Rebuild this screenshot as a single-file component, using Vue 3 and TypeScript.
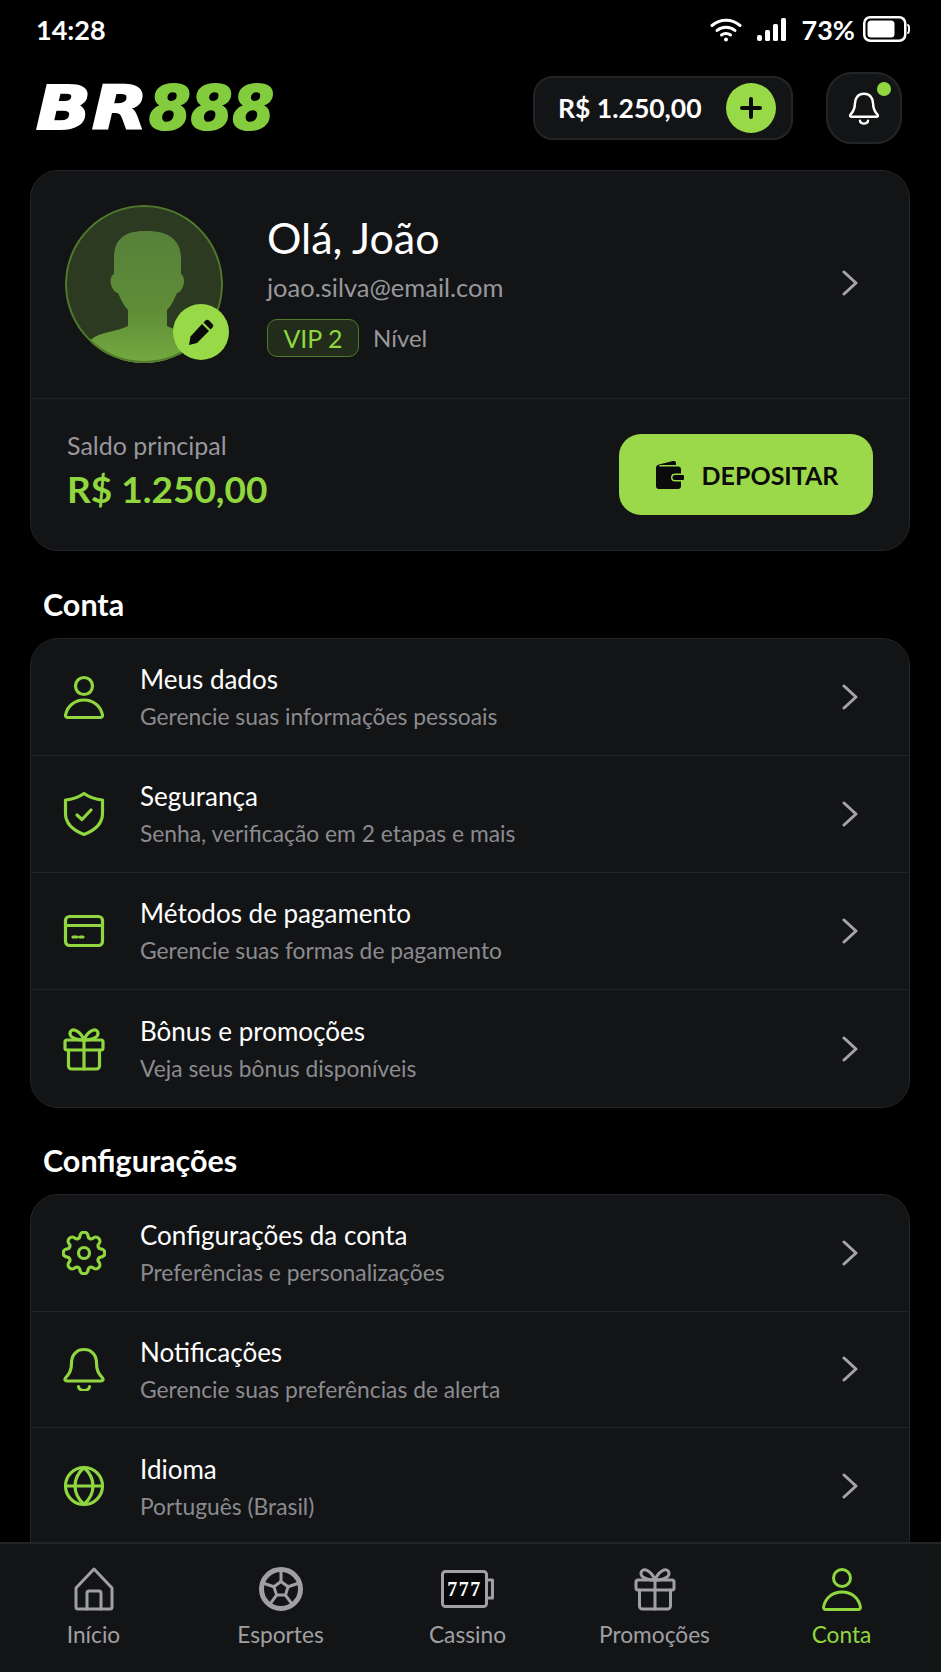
<script setup lang="ts">
interface MenuItem {
  icon: string
  title: string
  sub: string
}

interface NavItem {
  icon: string
  label: string
  active?: boolean
}

// engrenagem de 8 dentes, gerada em vez de escrita à mão
function gearPath(): string {
  const c = 22
  const r = 17.2
  const half = 0.24
  const pt = (a: number) => `${(c + r * Math.cos(a)).toFixed(2)} ${(c + r * Math.sin(a)).toFixed(2)}`
  let d = ''
  for (let i = 0; i < 8; i++) {
    const a = (i * Math.PI) / 4 - Math.PI / 2
    d += i === 0 ? `M${pt(a - half)}` : ''
    d += `A4 4 0 0 1 ${pt(a + half)}`
    d += `A3 3 0 0 0 ${pt(a + Math.PI / 4 - half)}`
  }
  return d + 'Z'
}

const icons: Record<string, string[]> = {
  user: [
    'M22 2.5a8.5 8.5 0 1 0 0 17a8.5 8.5 0 1 0 0-17Z',
    'M6 42.5h32c1.8 0 2.8-1.2 2.4-2.8C38.5 30.5 31 25 22 25S5.5 30.5 3.6 39.7C3.2 41.3 4.2 42.5 6 42.5Z'
  ],
  shield: [
    'M22 1.5C27 5 33 7.5 40.5 8v13.5c0 9.5-7 16.5-18.5 21C10.5 38 3.5 31 3.5 21.5V8C11 7.5 17 5 22 1.5Z',
    'M15 23l5 4.5 9-9.5'
  ],
  card: [
    'M7.5 7.5h29a4 4 0 0 1 4 4v21a4 4 0 0 1-4 4h-29a4 4 0 0 1-4-4v-21a4 4 0 0 1 4-4Z',
    'M3.5 16.5h37',
    'M11 28h4M18 28h3'
  ],
  gift: [
    'M5 13h34a2 2 0 0 1 2 2v6a2 2 0 0 1-2 2H5a2 2 0 0 1-2-2v-6a2 2 0 0 1 2-2Z',
    'M6.5 23v16a3 3 0 0 0 3 3h25a3 3 0 0 0 3-3V23',
    'M22 13v29',
    'M22 13C19 5 11 0 8.5 4.5 6 9.5 13 13 22 13ZM22 13C25 5 33 0 35.5 4.5 38 9.5 31 13 22 13Z'
  ],
  gear: [gearPath(), 'M22 16.5a5.5 5.5 0 1 0 0 11a5.5 5.5 0 1 0 0-11Z'],
  bell: [
    'M22 2.5c-8 0-12.5 6-12.5 13.5 0 7.5-2 10.5-6 15-1.3 1.5-.4 3 1.5 3h34c1.9 0 2.8-1.5 1.5-3-4-4.5-6-7.5-6-15C34.5 8.5 30 2.5 22 2.5Z',
    'M16.5 39.5a5.5 4 0 0 0 11 0'
  ],
  globe: [
    'M22 3.5a18.5 18.5 0 1 0 0 37a18.5 18.5 0 1 0 0-37Z',
    'M22 3.5c-12 11-12 26 0 37c12-11 12-26 0-37Z',
    'M3.5 22h37'
  ],
  home: [
    'M22 2 40 21v19a2 2 0 0 1-2 2H6a2 2 0 0 1-2-2V21Z',
    'M15 42V26a2 2 0 0 1 2-2h10a2 2 0 0 1 2 2V42'
  ],
  ball: [
    'M22 1.5a20.5 20.5 0 1 0 0 41a20.5 20.5 0 1 0 0-41Z',
    'M22 3.5a18.5 18.5 0 1 0 0 37a18.5 18.5 0 1 0 0-37Z',
    'M22 14.5l7.1 5.2-2.7 8.4h-8.8l-2.7-8.4Z',
    'M22 14.5V2M29.1 19.7 41 15.8M26.4 28.1 33.8 38.2M17.6 28.1 10.2 38.2M14.9 19.7 3 15.8'
  ]
}

const accountItems: MenuItem[] = [
  { icon: 'user', title: 'Meus dados', sub: 'Gerencie suas informações pessoais' },
  { icon: 'shield', title: 'Segurança', sub: 'Senha, verificação em 2 etapas e mais' },
  { icon: 'card', title: 'Métodos de pagamento', sub: 'Gerencie suas formas de pagamento' },
  { icon: 'gift', title: 'Bônus e promoções', sub: 'Veja seus bônus disponíveis' }
]

const settingsItems: MenuItem[] = [
  { icon: 'gear', title: 'Configurações da conta', sub: 'Preferências e personalizações' },
  { icon: 'bell', title: 'Notificações', sub: 'Gerencie suas preferências de alerta' },
  { icon: 'globe', title: 'Idioma', sub: 'Português (Brasil)' }
]

const sections = [
  { title: 'Conta', items: accountItems },
  { title: 'Configurações', items: settingsItems }
]

const navItems: NavItem[] = [
  { icon: 'home', label: 'Início' },
  { icon: 'ball', label: 'Esportes' },
  { icon: 'slot', label: 'Cassino' },
  { icon: 'gift', label: 'Promoções' },
  { icon: 'user', label: 'Conta', active: true }
]
</script>

<template>
  <div class="phone">
    <div class="scroll">
      <div class="status">
        <span class="time">14:28</span>
        <div class="status-right">
          <svg class="wifi" width="32" height="26" viewBox="0 0 32 26" fill="none" stroke="#fff" stroke-width="3" stroke-linecap="round">
            <path d="M2 9.5C10 2.5 22 2.5 30 9.5" />
            <path d="M7 14.5C12 10 20 10 25 14.5" />
            <path d="M11.5 19C14 17 18 17 20.5 19" />
            <circle cx="16" cy="23.5" r="2" fill="#fff" stroke="none" />
          </svg>
          <svg width="30" height="24" viewBox="0 0 30 24" fill="#fff">
            <rect x="0" y="18" width="5" height="6" rx="2" />
            <rect x="8" y="13" width="5" height="11" rx="1.5" />
            <rect x="16" y="7" width="5" height="17" rx="1.5" />
            <rect x="24" y="1" width="5" height="23" rx="1.5" />
          </svg>
          <span class="pct">73%</span>
          <svg width="47" height="26" viewBox="0 0 47 26" fill="none">
            <rect x="1.25" y="1.25" width="41" height="23.5" rx="6" stroke="#fff" stroke-width="2.5" />
            <rect x="4.5" y="4.5" width="27" height="17" rx="3.5" fill="#fff" />
            <path d="M45 9c1.5 1 1.5 7 0 8" stroke="#fff" stroke-width="2" stroke-linecap="round" />
          </svg>
        </div>
      </div>

      <header class="header">
        <div class="logo"><span class="logo-br">BR</span><span class="logo-num">888</span></div>
        <div class="balance-pill">
          <span>R$ 1.250,00</span>
          <span class="plus">
            <svg width="24" height="24" viewBox="0 0 24 24" stroke="#0b0b0b" stroke-width="4" stroke-linecap="round"><path d="M12 3v18M3 12h18" /></svg>
          </span>
        </div>
        <div class="bell-btn">
          <svg width="32" height="36" viewBox="0 0 44 44" fill="none" stroke="#fff" stroke-width="3.4" stroke-linecap="round" stroke-linejoin="round">
            <path v-for="d in icons.bell" :key="d" :d="d" />
          </svg>
          <span class="bell-dot"></span>
        </div>
      </header>

      <section class="card profile-card">
        <div class="profile-top">
          <div class="avatar-wrap">
            <div class="avatar">
              <svg width="158" height="158" viewBox="0 0 158 158">
                <defs>
                  <linearGradient id="sil" x1="0" y1="0" x2="0" y2="1">
                    <stop offset="0" stop-color="#57803a" />
                    <stop offset="0.6" stop-color="#5f8d37" />
                    <stop offset="1" stop-color="#74aa40" />
                  </linearGradient>
                </defs>
                <path fill="url(#sil)" d="M79 26c-20 0-30 9-30 27v16c-2 1-3.5 3-3.5 7 0 5 3 11 7.5 12 3 7 6 13 10 17v16c-12 6-26 5-38 14L10 158h138l-7-23c-12-9-27-8-39-14v-16c4-4 7-10 10-17 4.5-1 7-7 7-12 0-4-1.5-6-3-7V53c0-18-13-27-33-27Z" />
              </svg>
            </div>
            <span class="edit">
              <svg width="28" height="28" viewBox="0 0 28 28" fill="#0b0b0b">
                <path d="M18.5 2.5a2.5 2.5 0 0 1 3.5 0l3.5 3.5a2.5 2.5 0 0 1 0 3.5L23.5 11.5 16.5 4.5Z" />
                <path d="M15 6l7 7L10 25l-8 2 1.5-8.5Z" />
              </svg>
            </span>
          </div>
          <div class="profile-info">
            <div class="hello">Olá, João</div>
            <div class="email">joao.silva@email.com</div>
            <div class="level">
              <span class="vip">VIP 2</span>
              <span class="level-text">Nível</span>
            </div>
          </div>
          <svg class="chev chev-top" width="18" height="26" viewBox="0 0 18 26" fill="none" stroke="#a5a5a8" stroke-width="3" stroke-linecap="round" stroke-linejoin="round"><path d="M3 2l12 11L3 24" /></svg>
        </div>
        <div class="profile-bottom">
          <div class="saldo">
            <div class="saldo-label">Saldo principal</div>
            <div class="saldo-value">R$ 1.250,00</div>
          </div>
          <button class="deposit">
            <svg width="30" height="30" viewBox="0 0 30 30" fill="#0b0b0b">
              <path d="M2 8C2 6 3 5 5 4.5L19 1c2-.4 3 .5 3 2V5H6.5C5 5 4.5 6.5 6 6.5H24c2 0 3 1 3 3v4h-6a4 4 0 0 0 0 8h6V26c0 2-1 3-3 3H5c-2 0-3-1-3-3Z" />
              <path d="M21 15h8a1 1 0 0 1 1 1v3a1 1 0 0 1-1 1h-8a2.5 2.5 0 0 1 0-5Z" />
            </svg>
            DEPOSITAR
          </button>
        </div>
      </section>

      <template v-for="section in sections" :key="section.title">
        <h2 class="section-title">{{ section.title }}</h2>
        <section class="card menu-card">
          <div v-for="item in section.items" :key="item.title" class="row">
            <svg class="row-icon" width="44" height="44" viewBox="0 0 44 44" fill="none" stroke="#8fd63f" stroke-width="3.2" stroke-linecap="round" stroke-linejoin="round">
              <path v-for="d in icons[item.icon]" :key="d" :d="d" />
            </svg>
            <div class="row-text">
              <div class="row-title">{{ item.title }}</div>
              <div class="row-sub">{{ item.sub }}</div>
            </div>
            <svg class="chev" width="18" height="26" viewBox="0 0 18 26" fill="none" stroke="#a5a5a8" stroke-width="3" stroke-linecap="round" stroke-linejoin="round"><path d="M3 2l12 11L3 24" /></svg>
          </div>
        </section>
      </template>
    </div>

    <nav class="nav">
      <div v-for="n in navItems" :key="n.label" class="nav-item" :class="{ active: n.active }">
        <svg v-if="n.icon === 'slot'" width="54" height="44" viewBox="0 0 54 44" fill="none" stroke="#a0a0a3" stroke-width="3" stroke-linejoin="round">
          <rect x="1.5" y="4.5" width="44" height="35" rx="3" fill="#08080a" />
          <path d="M45.5 13h6v18h-6" />
          <text x="23.5" y="29" class="slot-text" stroke="none" fill="#fff" text-anchor="middle">777</text>
        </svg>
        <svg v-else width="44" height="44" viewBox="0 0 44 44" fill="none" stroke-width="3" stroke-linecap="round" stroke-linejoin="round" :stroke="n.active ? '#8fd63f' : '#a0a0a3'">
          <path v-for="d in icons[n.icon]" :key="d" :d="d" />
        </svg>
        <span class="nav-label">{{ n.label }}</span>
      </div>
    </nav>
  </div>
</template>

<style>
html, body {
  margin: 0;
  background: #000;
}
</style>

<style scoped>
.phone {
  width: 941px;
  height: 1672px;
  display: flex;
  flex-direction: column;
  overflow: hidden;
  background: #000;
  color: #fff;
  font-family: "Lato", "Noto Sans", sans-serif;
}

.scroll {
  flex: 1;
  min-height: 0;
  overflow: hidden;
  padding: 0 31px 0 30px;
}

.status {
  height: 58px;
  display: flex;
  align-items: center;
  justify-content: space-between;
  padding: 0 0 0 6px;
}

.time {
  font-size: 27px;
  font-weight: 700;
}

.status-right {
  display: flex;
  align-items: center;
  gap: 12px;
}

.wifi {
  margin-right: 3px;
}

.pct {
  font-size: 27px;
  font-weight: 700;
  margin-left: 3px;
  margin-right: -4px;
}

.header {
  height: 99px;
  display: flex;
  align-items: center;
  padding: 0 8px 0 6px;
  margin-bottom: 13px;
}

.logo {
  flex: 1;
  font-family: "DejaVu Sans", sans-serif;
  font-style: italic;
  font-weight: 700;
  font-size: 60px;
  line-height: 1;
  -webkit-text-stroke: 2px currentColor;
}

.logo-br {
  display: inline-block;
  letter-spacing: 1px;
  margin-right: 19px;
  transform: scaleX(1.2);
  transform-origin: left center;
}

.logo-num {
  color: #82cc3e;
}

.balance-pill {
  width: 260px;
  height: 64px;
  box-sizing: border-box;
  display: flex;
  align-items: center;
  justify-content: space-between;
  padding: 0 15px 0 23px;
  border: 2px solid #232427;
  border-radius: 20px;
  background: #131416;
  font-size: 26.5px;
  font-weight: 700;
}

.plus {
  width: 50px;
  height: 50px;
  border-radius: 50%;
  background: #98d948;
  display: flex;
  align-items: center;
  justify-content: center;
}

.bell-btn {
  position: relative;
  width: 76px;
  height: 72px;
  margin-left: 33px;
  box-sizing: border-box;
  display: flex;
  align-items: center;
  justify-content: center;
  border: 2px solid #232427;
  border-radius: 26px;
  background: #131416;
}

.bell-dot {
  position: absolute;
  top: 8px;
  right: 9px;
  width: 14px;
  height: 14px;
  border-radius: 50%;
  background: #8fd63f;
}

.card {
  border: 1.5px solid #232427;
  border-radius: 28px;
  background: #131416;
  box-sizing: border-box;
}

.profile-card {
  height: 381px;
}

.profile-top {
  height: 228px;
  box-sizing: border-box;
  display: flex;
  align-items: center;
  padding: 0 50px 0 34px;
  border-bottom: 1.5px solid #212225;
}

.avatar-wrap {
  position: relative;
  width: 158px;
  height: 158px;
  flex-shrink: 0;
  margin-right: 44px;
  margin-top: -2px;
}

.avatar {
  position: relative;
  width: 158px;
  height: 158px;
  box-sizing: border-box;
  border-radius: 50%;
  overflow: hidden;
  background: #2b3a20;
}

.avatar::after {
  content: "";
  position: absolute;
  inset: 0;
  border-radius: 50%;
  box-shadow: inset 0 0 0 2px #4f7a2c;
}

.avatar svg {
  display: block;
}

.edit {
  position: absolute;
  right: -6px;
  bottom: 3px;
  width: 56px;
  height: 56px;
  border-radius: 50%;
  background: #98d948;
  display: flex;
  align-items: center;
  justify-content: center;
}

.profile-info {
  flex: 1;
}

.hello {
  font-size: 43px;
  font-weight: 400;
  line-height: 50px;
}

.email {
  margin-top: 8px;
  font-size: 25.5px;
  line-height: 32px;
  color: #98989c;
}

.level {
  margin-top: 16px;
  display: flex;
  align-items: center;
  gap: 14px;
}

.vip {
  width: 92px;
  height: 38px;
  box-sizing: border-box;
  display: flex;
  align-items: center;
  justify-content: center;
  border: 1.5px solid #4f7a2c;
  border-radius: 10px;
  background: #212c1b;
  color: #8fd63f;
  font-size: 25px;
  font-weight: 400;
}

.level-text {
  font-size: 24px;
  color: #98989c;
}

.chev-top {
  margin-top: -3px;
}

.profile-bottom {
  height: 151px;
  box-sizing: border-box;
  display: flex;
  align-items: center;
  justify-content: space-between;
  padding: 0 36px 0 36px;
}

.saldo {
  margin-bottom: 9px;
}

.saldo-label {
  font-size: 25px;
  line-height: 32px;
  color: #98989c;
}

.saldo-value {
  margin-top: 5px;
  font-size: 37px;
  line-height: 46px;
  font-weight: 700;
  color: #8fd63f;
}

.deposit {
  width: 254px;
  height: 81px;
  border: none;
  border-radius: 22px;
  background: #9bd94a;
  color: #0b0b0b;
  display: flex;
  align-items: center;
  justify-content: center;
  gap: 18px;
  font-family: inherit;
  font-size: 25px;
  font-weight: 700;
}

.section-title {
  margin: 0;
  height: 87px;
  box-sizing: border-box;
  padding: 35px 0 0 13px;
  font-size: 30.5px;
  line-height: 36px;
  font-weight: 700;
}

.menu-card + .section-title {
  height: 86px;
  padding-top: 34px;
}

.menu-card:last-child {
  padding-bottom: 40px;
}

.menu-card:last-child .row {
  height: 116.5px;
}

.menu-card:last-child .row-text {
  padding-top: 1px;
}

.row {
  height: 117px;
  box-sizing: border-box;
  display: flex;
  align-items: center;
  padding: 0 50px 0 31px;
  border-bottom: 1.5px solid #212225;
}

.row:last-child {
  border-bottom: none;
}

.row-icon {
  flex-shrink: 0;
  margin-right: 34px;
}

.row-text {
  flex: 1;
}

.row-title {
  font-size: 26px;
  line-height: 32px;
  font-weight: 400;
}

.row-sub {
  margin-top: 6px;
  font-size: 22.8px;
  line-height: 30px;
  color: #8b8b8f;
}

.nav {
  flex-shrink: 0;
  height: 130px;
  box-sizing: border-box;
  display: grid;
  grid-template-columns: repeat(5, 1fr);
  padding: 23px 6px 0 0;
  border-top: 2px solid #232427;
  background: #131416;
}

.nav-item {
  display: flex;
  flex-direction: column;
  align-items: center;
  color: #a0a0a3;
}

.nav-item svg {
  height: 44px;
}

.nav-item.active {
  color: #8fd63f;
}

.nav-label {
  margin-top: 9px;
  font-size: 22.7px;
  line-height: 30px;
}

.slot-text {
  font-family: "Liberation Serif", serif;
  font-size: 20px;
  font-weight: 700;
  letter-spacing: 1.5px;
}
</style>
